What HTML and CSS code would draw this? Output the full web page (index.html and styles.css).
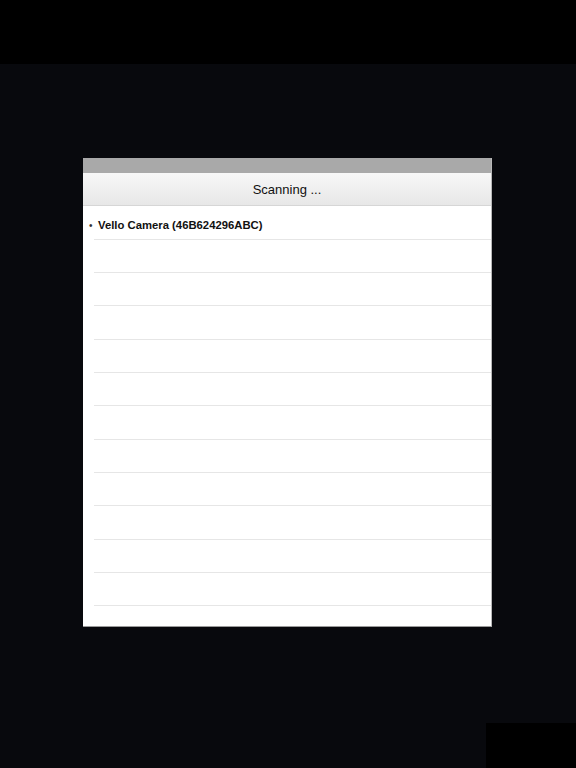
FILE: index.html
```html
<!DOCTYPE html>
<html>
<head>
<meta charset="utf-8">
<link rel="stylesheet" href="styles.css">
</head>
<body>
<div class="topband"></div>
<div class="stage">
  <div class="dialog">
    <div class="graybar"></div>
    <div class="header">Scanning ...</div>
    <ul class="list">
      <li class="row"><span class="bullet">•</span><span class="label">Vello Camera (46B624296ABC)</span></li>
      <li class="row"></li>
      <li class="row"></li>
      <li class="row"></li>
      <li class="row"></li>
      <li class="row"></li>
      <li class="row"></li>
      <li class="row"></li>
      <li class="row"></li>
      <li class="row"></li>
      <li class="row"></li>
      <li class="row"></li>
      <li class="row last"></li>
    </ul>
  </div>
</div>
<div class="corner"></div>
</body>
</html>
```
FILE: styles.css
```css
html, body {
  margin: 0;
  padding: 0;
  width: 576px;
  height: 768px;
  overflow: hidden;
  background: #08090d;
  font-family: "Liberation Sans", Arial, sans-serif;
  position: relative;
}
.topband {
  height: 64px;
  background: #000;
}
.stage {
  padding-top: 94px;
  padding-left: 83px;
}
.dialog {
  width: 409px;
  height: 468.7px;
  background: #fff;
  overflow: hidden;
  box-sizing: border-box;
  border-right: 1px solid #b8b8b8;
  border-bottom: 1px solid #9a9a9a;
}
.graybar {
  height: 15px;
  background: #a9a9a9;
}
.header {
  height: 33.33px;
  box-sizing: border-box;
  border-bottom: 1px solid #d6d6d6;
  background: linear-gradient(#f7f7f7, #e7e7e7);
  display: flex;
  align-items: center;
  justify-content: center;
  font-size: 13px;
  color: #111;
  padding-top: 1px;
}
.list {
  list-style: none;
  margin: 0;
  padding: 0 0 0 11px;
}
.row {
  height: 33.333px;
  box-sizing: border-box;
  border-bottom: 1px solid #e6e6e6;
  display: flex;
  align-items: center;
  position: relative;
}
.row.last {
  border-bottom: none;
}
.bullet {
  position: absolute;
  left: -5px;
  top: 15px;
  font-size: 10px;
  line-height: 10px;
  color: #333;
}
.label {
  margin-left: 4px;
  font-size: 11.3px;
  font-weight: bold;
  color: #111;
  padding-top: 5px;
}
.corner {
  position: absolute;
  right: 0;
  bottom: 0;
  width: 90px;
  height: 45px;
  background: #000;
}
```
